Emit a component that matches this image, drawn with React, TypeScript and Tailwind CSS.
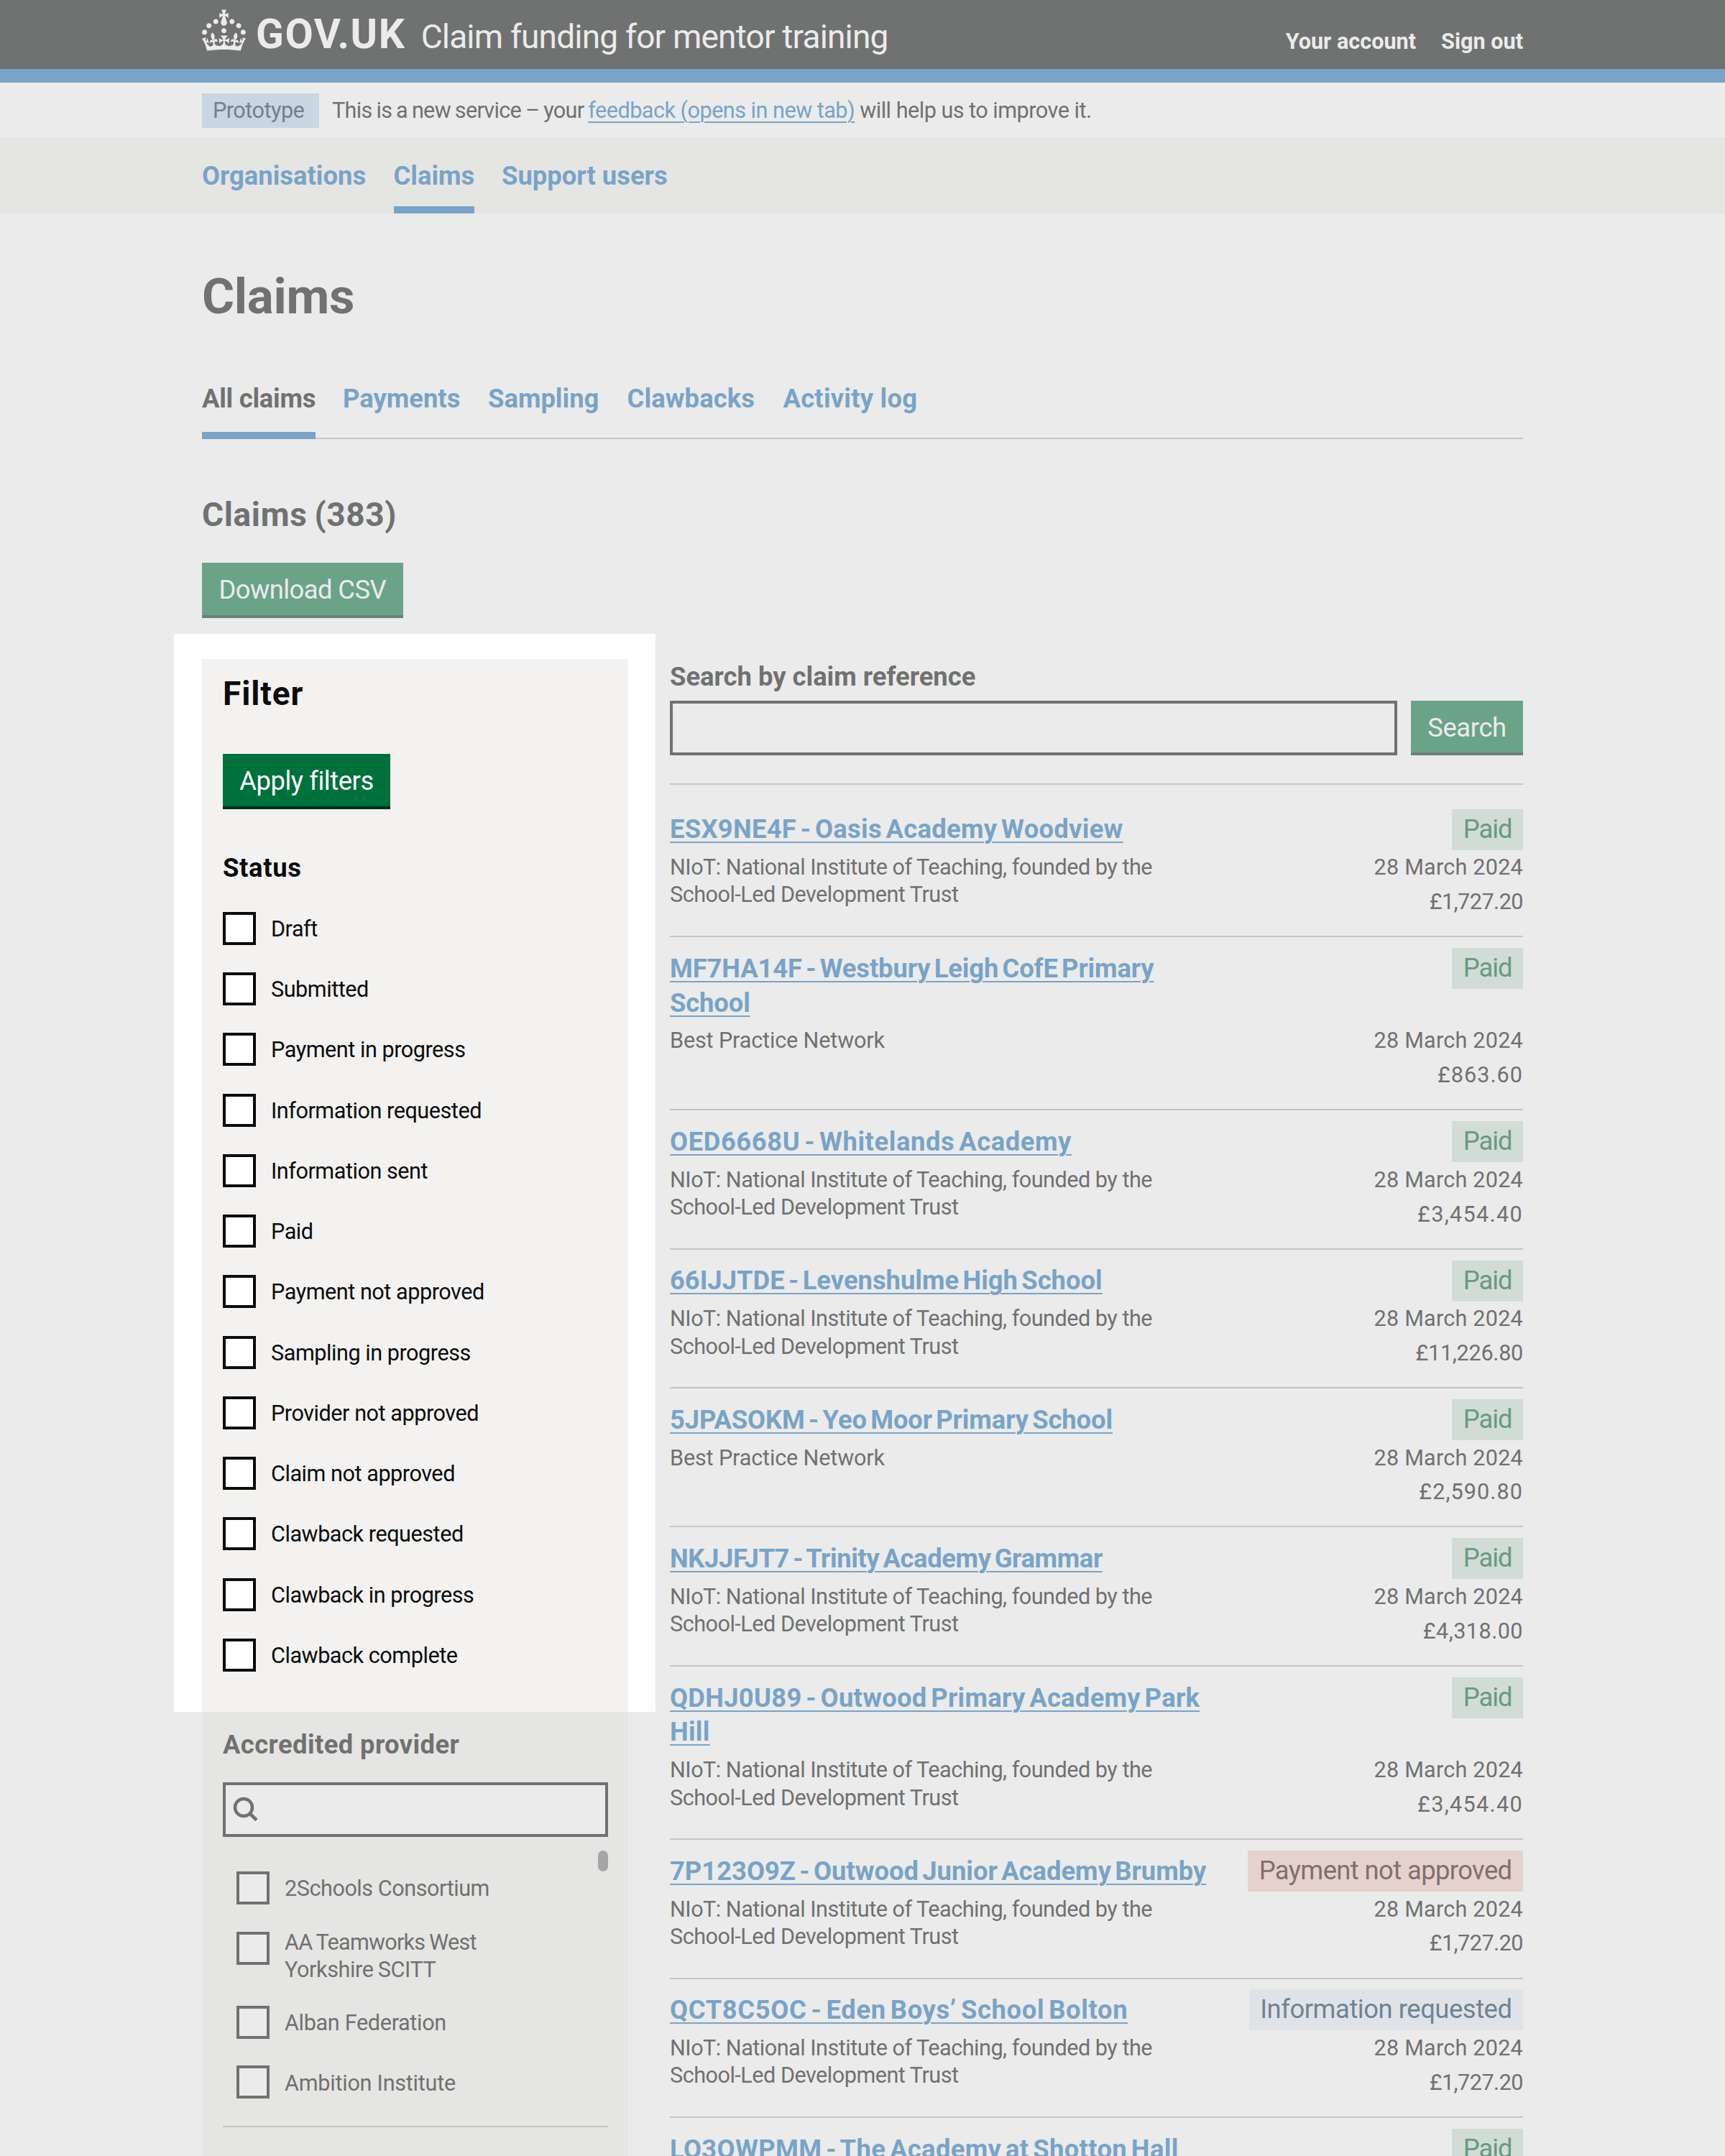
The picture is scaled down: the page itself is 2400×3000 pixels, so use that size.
import type { ReactNode } from "react";

type Tone = "green" | "red" | "blue";

const tagTones: Record<Tone, string> = {
  green: "bg-[#d1dcd7] text-[#6b9883] tracking-[-0.028em]",
  red: "bg-[#e5d2ce] text-[#80706e] tracking-[-0.0165em]",
  blue: "bg-[#dfe3e8] text-[#708393] tracking-[-0.0125em]",
};

const tabs = [
  { label: "All claims", width: "w-[157.5px]", tracking: "tracking-[-0.007em]", current: true },
  { label: "Payments", width: "w-[163.5px]", tracking: "tracking-[0em]" },
  { label: "Sampling", width: "w-[155px]", tracking: "tracking-[0em]" },
  { label: "Clawbacks", width: "w-[178.5px]", tracking: "tracking-[0.003em]" },
  { label: "Activity log", width: "w-[187px]", tracking: "tracking-[0.006em]" },
];

const statuses = [
  "Draft",
  "Submitted",
  "Payment in progress",
  "Information requested",
  "Information sent",
  "Paid",
  "Payment not approved",
  "Sampling in progress",
  "Provider not approved",
  "Claim not approved",
  "Clawback requested",
  "Clawback in progress",
  "Clawback complete",
];

interface Provider {
  name: string;
  tracking: string;
}

const niot: Provider = {
  name: "NIoT: National Institute of Teaching, founded by the School-Led Development Trust",
  tracking: "tracking-[-0.0163em]",
};
const bpn: Provider = { name: "Best Practice Network", tracking: "tracking-[-0.005em]" };

interface Claim {
  title: string;
  tracking: string;
  provider: Provider;
  amount: string;
  amountTracking: string;
  status: string;
  tone: Tone;
}

const claims: Claim[] = [
  { title: "ESX9NE4F - Oasis Academy Woodview", tracking: "tracking-[0.0075em]", provider: niot, amount: "£1,727.20", amountTracking: "tracking-[-0.017em]", status: "Paid", tone: "green" },
  { title: "MF7HA14F - Westbury Leigh CofE Primary School", tracking: "tracking-[-0.0035em]", provider: bpn, amount: "£863.60", amountTracking: "tracking-[0.034em]", status: "Paid", tone: "green" },
  { title: "OED6668U - Whitelands Academy", tracking: "tracking-[0.0155em]", provider: niot, amount: "£3,454.40", amountTracking: "tracking-[0.043em]", status: "Paid", tone: "green" },
  { title: "66IJJTDE - Levenshulme High School", tracking: "tracking-[-0.0005em]", provider: niot, amount: "£11,226.80", amountTracking: "tracking-[-0.009em]", status: "Paid", tone: "green" },
  { title: "5JPASOKM - Yeo Moor Primary School", tracking: "tracking-[-0.003em]", provider: bpn, amount: "£2,590.80", amountTracking: "tracking-[0.035em]", status: "Paid", tone: "green" },
  { title: "NKJJFJT7 - Trinity Academy Grammar", tracking: "tracking-[-0.0105em]", provider: niot, amount: "£4,318.00", amountTracking: "tracking-[0.015em]", status: "Paid", tone: "green" },
  { title: "QDHJ0U89 - Outwood Primary Academy Park Hill", tracking: "tracking-[0.0075em]", provider: niot, amount: "£3,454.40", amountTracking: "tracking-[0.043em]", status: "Paid", tone: "green" },
  { title: "7P123O9Z - Outwood Junior Academy Brumby", tracking: "tracking-[-0.0005em]", provider: niot, amount: "£1,727.20", amountTracking: "tracking-[-0.017em]", status: "Payment not approved", tone: "red" },
  { title: "QCT8C5OC - Eden Boys’ School Bolton", tracking: "tracking-[0.0175em]", provider: niot, amount: "£1,727.20", amountTracking: "tracking-[-0.017em]", status: "Information requested", tone: "blue" },
  { title: "LO3OWPMM - The Academy at Shotton Hall", tracking: "tracking-[0.0095em]", provider: niot, amount: "£1,727.20", amountTracking: "tracking-[-0.017em]", status: "Paid", tone: "green" },
];

function Crown() {
  return (
    <svg viewBox="0 0 32 30" className="mt-[13px] h-[58px] w-[61px] fill-[#ebebeb]" aria-hidden="true">
      <path d="M22.6 10.4c-1 .4-2-.1-2.4-1-.4-.9.1-2 1-2.4.9-.4 2 .1 2.4 1s-.1 2-1 2.4m-5.9 6.7c-.9.4-2-.1-2.4-1-.4-.9.1-2 1-2.4.9-.4 2 .1 2.4 1s-.1 2-1 2.4m10.8-3.7c-1 .4-2-.1-2.4-1-.4-.9.1-2 1-2.4.9-.4 2 .1 2.4 1s0 2-1 2.4m3.3 4.8c-1 .4-2-.1-2.4-1-.4-.9.1-2 1-2.4.9-.4 2 .1 2.4 1s-.1 2-1 2.4M17 4.7l2.3 1.2V2.5l-2.3.7-.2-.2.9-3h-3.4l.9 3-.2.2c-.1.1-2.3-.7-2.3-.7v3.4L15 4.7c.1.1.1.2.2.2l-1.3 4c-.1.2-.1.4-.1.6 0 1.1.8 2 1.9 2.2h.7c1-.2 1.9-1.1 1.9-2.1 0-.2 0-.4-.1-.6l-1.3-4c-.1-.2 0-.2.1-.3m-7.6 5.7c.9.4 2-.1 2.4-1 .4-.9-.1-2-1-2.4-.9-.4-2 .1-2.4 1s0 2 1 2.4m-5 3c.9.4 2-.1 2.4-1 .4-.9-.1-2-1-2.4-.9-.4-2 .1-2.4 1s.1 2 1 2.4m-3.2 4.8c.9.4 2-.1 2.4-1 .4-.9-.1-2-1-2.4-.9-.4-2 .1-2.4 1s0 2 1 2.4m14.8 11c4.4 0 8.6.3 12.3.8 1.1-4.5 2.4-7 3.7-8.8l-2.5-.9c.2 1.3.3 1.9 0 2.7-.4-.4-.8-1.1-1.1-2.3l-1.2 4c.7-.5 1.3-.8 2-.9-1.1 2.5-2.6 3.1-3.5 3-1.1-.2-1.7-1.2-1.5-2.1.3-1.2 1.5-1.5 2.1-.1 1.1-2.3-.8-3-2-2.3 1.9-1.9 2.1-3.5.6-5.6-2.1 1.6-2.1 3.2-1.2 5.5-1.2-1.4-3.2-.6-2.5 1.6.9-1.4 2.1-.5 1.9.8-.2 1.1-1.7 2.1-3.5 1.9-2.7-.2-2.9-2.1-2.9-3.6.7-.1 1.9.5 2.9 1.9l.4-4.3c-1.1 1.1-2.1 1.4-3.2 1.4.4-1.2 2.1-3 2.1-3h-5.4s1.7 1.9 2.1 3c-1.1 0-2.1-.2-3.2-1.4l.4 4.3c1-1.4 2.2-2 2.9-1.9-.1 1.5-.2 3.4-2.9 3.6-1.9.2-3.4-.8-3.5-1.9-.2-1.3 1-2.2 1.9-.8.7-2.3-1.2-3-2.5-1.6.9-2.2.9-3.9-1.2-5.5-1.5 2-1.3 3.7.6 5.6-1.2-.7-3.1 0-2 2.3.6-1.4 1.8-1.1 2.1.1.2.9-.3 1.9-1.5 2.1-.9.2-2.4-.5-3.5-3 .6 0 1.2.3 2 .9l-1.2-4c-.3 1.1-.7 1.9-1.1 2.3-.3-.8-.2-1.4 0-2.7l-2.9.9C1.3 23 2.6 25.5 3.7 30c3.7-.5 7.9-.8 12.3-.8" />
    </svg>
  );
}

function Container({ className, children }: { className: string; children: ReactNode }) {
  return <div className={`mx-auto w-[1838px] ${className}`}>{children}</div>;
}

function Header() {
  return (
    <header className="h-[115px] border-b-[19px] border-[#79a3c7] bg-[#707271] text-[#ebebeb]">
      <Container className="flex h-full items-start">
        <Crown />
        <span className="ml-[14px] mt-[12px] text-[57px] leading-[71px] font-bold tracking-[0.028em]">GOV.UK</span>
        <span className="ml-[21px] mt-[22px] text-[46px] leading-[58px] tracking-[-0.0175em]">
          Claim funding for mentor training
        </span>
        <nav className="ml-auto mt-[34px] flex gap-[35px] text-[30.6px] leading-[48px] font-bold">
          <a>Your account</a>
          <a>Sign out</a>
        </nav>
      </Container>
    </header>
  );
}

function PhaseBanner() {
  return (
    <Container className="flex h-[76px] items-start pt-[15px] text-[30.6px] leading-[48px] tracking-[-0.0165em] text-[#707171]">
      <strong className="w-[163px] bg-[#c9d5e0] pl-[15px] font-normal text-[#708190]">Prototype</strong>
      <p className="ml-[18px]">
        <span className="tracking-[-0.023em] [word-spacing:-1px]">This is a new service – your </span>
        <a className="text-[#79a3c7] underline decoration-2 underline-offset-[5px]">feedback (opens in new tab)</a> will
        help us to improve it.
      </p>
    </Container>
  );
}

function PrimaryNav() {
  return (
    <div className="h-[106px] bg-[#e5e5e3]">
      <Container className="flex h-full gap-[38.5px] text-[36.4px] leading-[48px] font-bold text-[#79a3c7]">
        <a className="w-[228px] pt-[30px]">Organisations</a>
        <a className="w-[112px] border-b-[10px] border-[#79a3c7] pt-[30px]">Claims</a>
        <a className="pt-[30px]">Support users</a>
      </Container>
    </div>
  );
}

function Checkbox({ dim }: { dim?: boolean }) {
  return (
    <span
      className={`size-[46px] shrink-0 border-4 ${dim ? "border-[#707171] bg-[#ebebeb]" : "border-[#0b0c0c] bg-white"}`}
    />
  );
}

function FilterPanel() {
  return (
    <aside className="relative w-[593px] shrink-0">
      <div className="absolute -top-[35px] -left-[39px] h-[1500px] w-[670px] bg-white" />
      <div className="relative h-[1465px] bg-[#f3f2f1] px-[29px] pt-[20px] text-[#0b0c0c]">
        <h2 className="text-[46px] leading-[57px] font-bold tracking-[0.02em]">Filter</h2>
        <button className="mt-[55px] block h-[77px] w-[233px] border-b-4 border-[#002d18] bg-[#00703c] pt-px text-[36.4px] leading-[74px] tracking-[-0.012em] text-white">
          Apply filters
        </button>
        <h3 className="mt-[58px] text-[36.4px] leading-[48px] font-bold tracking-[0.018em]">Status</h3>
        <ul className="mt-[37px] flex flex-col">
          {statuses.map((status) => (
            <li key={status} className="flex h-[84.24px] items-start gap-[21px]">
              <Checkbox />
              <span className="pt-[5px] text-[30.6px] leading-[38.3px] tracking-[-0.015em]">{status}</span>
            </li>
          ))}
        </ul>
      </div>
      <div className="relative h-[700px] bg-[#e5e5e3] pr-[28px] pl-[29px] pt-[22px] text-[#707171]">
        <h3 className="text-[36.4px] leading-[48px] font-bold tracking-[0.011em]">Accredited provider</h3>
        <div className="mt-[28px] flex h-[76px] items-center border-4 border-[#707171] bg-[#ebebeb] pl-[10px]">
          <svg viewBox="0 0 36 36" className="size-[36px] fill-none stroke-[#707171] stroke-[4.5]" aria-hidden="true">
            <circle cx="15" cy="15" r="12" />
            <path d="M23.5 23.5 33 32.5" />
          </svg>
        </div>
        <div className="mt-[19px] flex h-[385px] justify-between border-b-2 border-[#c4c5c6]">
          <ul className="mt-[29px] ml-[19px] flex flex-col text-[30.6px] leading-[38.3px] tracking-[-0.015em]">
            <li className="flex h-[84px] gap-[21px]">
              <Checkbox dim />
              <span className="pt-[5px]">2Schools Consortium</span>
            </li>
            <li className="flex h-[104px] gap-[21px]">
              <Checkbox dim />
              <span className="-mt-[4px] tracking-[-0.025em] [word-spacing:-1px]">
                AA Teamworks West
                <br />
                <span className="tracking-[-0.013em]">Yorkshire SCITT</span>
              </span>
            </li>
            <li className="flex h-[84px] gap-[21px]">
              <Checkbox dim />
              <span className="pt-[5px] tracking-[-0.011em]">Alban Federation</span>
            </li>
            <li className="flex h-[84px] gap-[21px]">
              <Checkbox dim />
              <span className="pt-[6px] tracking-[-0.008em]">Ambition Institute</span>
            </li>
          </ul>
          <div className="h-[29px] w-[14px] rounded-full bg-[#a6a6a6]" />
        </div>
      </div>
    </aside>
  );
}

function Results() {
  return (
    <section className="ml-[58px] flex-1 pt-px text-[#707171]">
      <label className="block text-[36.4px] leading-[48px] font-bold">Search by claim reference</label>
      <div className="mt-[9px] flex gap-[19px]">
        <div className="h-[76px] flex-1 border-4 border-[#707171]" />
        <button className="h-[76px] w-[156px] border-b-4 border-[#6b8177] bg-[#6ba389] pt-px text-[36.4px] leading-[74px] tracking-[-0.01em] text-[#ebebeb]">
          Search
        </button>
      </div>
      <ul className="mt-[38.5px] border-t-2 border-[#c4c5c6] pt-[19.2px]">
        {claims.map((claim) => (
          <li
            key={claim.title}
            className="grid grid-cols-[765px_1fr] border-b-2 border-[#c4c5c6] pt-[19.7px] pb-[22.8px] text-[30.6px] leading-[38.3px]"
          >
            <h3
              className={`text-[36.4px] leading-[47.9px] font-bold text-[#79a3c7] [word-spacing:-0.1em] ${claim.tracking}`}
            >
              <a className="underline decoration-2 underline-offset-[5px]">{claim.title}</a>
            </h3>
            <div className="-mt-[4.8px] flex h-[47px] justify-end">
              <strong
                className={`h-[57px] px-[15.5px] text-[36.4px] leading-[56px] font-normal whitespace-nowrap ${tagTones[claim.tone]}`}
              >
                {claim.status}
              </strong>
            </div>
            <p className={`mt-[9.9px] ${claim.provider.tracking}`}>{claim.provider.name}</p>
            <div className="mt-[9.9px] text-right">
              <p className="tracking-[0.007em]">28 March 2024</p>
              <p className={`mt-[4.4px] leading-[47.9px] ${claim.amountTracking}`}>{claim.amount}</p>
              <div className="h-[0.5px]" />
            </div>
          </li>
        ))}
      </ul>
    </section>
  );
}

export default function App() {
  return (
    <div className="h-[3000px] w-[2400px] overflow-hidden bg-[#ebebeb] font-['Roboto',sans-serif] text-[#707171]">
      <Header />
      <PhaseBanner />
      <PrimaryNav />
      <Container className="pt-[77px]">
        <h1 className="text-[69px] leading-[77px] font-bold tracking-[-0.004em]">Claims</h1>
        <nav className="mt-[80px] flex h-[80px] gap-[38.5px] border-b-2 border-[#c4c5c6] text-[36.4px] leading-[48px] font-bold">
          {tabs.map((tab) => (
            <a
              key={tab.label}
              className={`h-[80px] whitespace-nowrap ${tab.width} ${tab.tracking} ${
                tab.current ? "border-b-[10px] border-[#79a3c7]" : "text-[#79a3c7]"
              }`}
            >
              {tab.label}
            </a>
          ))}
        </nav>
        <h2 className="mt-[77px] text-[46px] leading-[57px] font-bold tracking-[0.014em] [word-spacing:-2px]">
          Claims (383)
        </h2>
        <button className="mt-[38px] block h-[77px] w-[279.5px] border-b-4 border-[#6b8177] bg-[#6ba389] pt-px text-[36.4px] leading-[74px] tracking-[-0.016em] text-[#ebebeb]">
          Download CSV
        </button>
        <div className="mt-[57px] flex items-start">
          <FilterPanel />
          <Results />
        </div>
      </Container>
    </div>
  );
}
